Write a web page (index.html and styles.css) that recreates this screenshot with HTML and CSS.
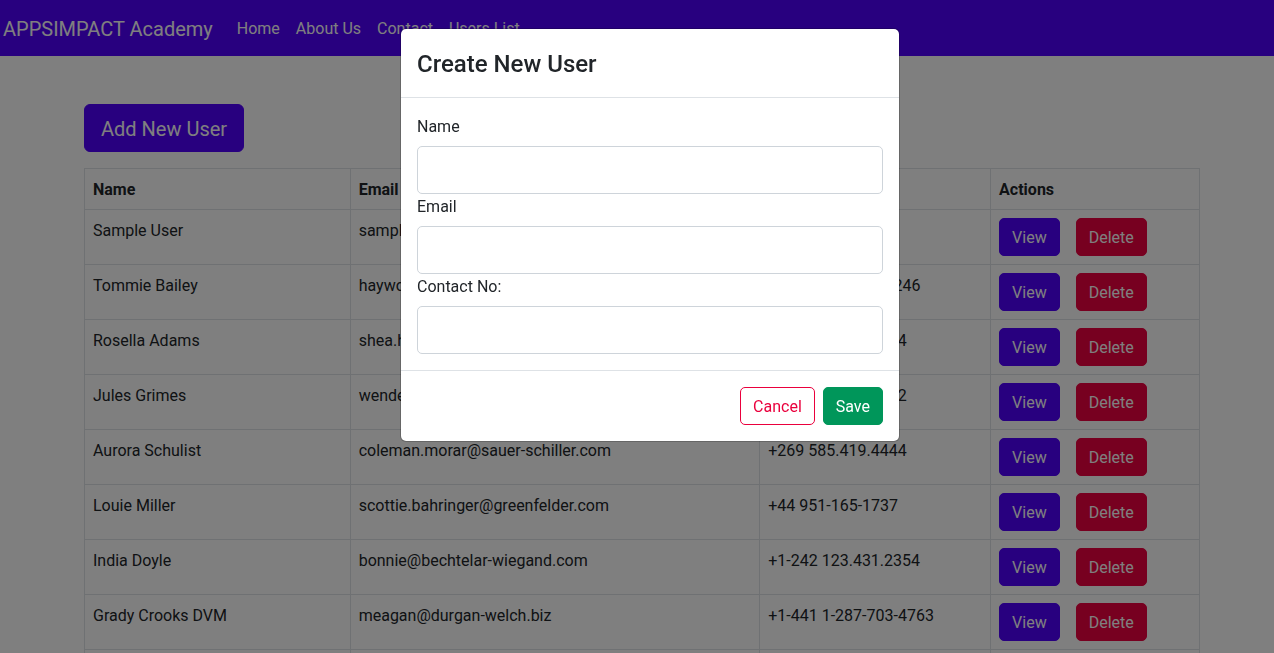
FILE: index.html
```html
<!DOCTYPE html>
<html lang="en">
<head>
<meta charset="utf-8">
<title>APPSIMPACT Academy</title>
<link rel="stylesheet" href="styles.css">
</head>
<body class="modal-open">
<nav class="navbar">
  <a class="brand" href="#">APPSIMPACT Academy</a>
  <ul class="nav">
    <li><a class="nav-link" href="#">Home</a></li>
    <li><a class="nav-link" href="#">About Us</a></li>
    <li><a class="nav-link" href="#">Contact</a></li>
    <li><a class="nav-link" href="#">Users List</a></li>
  </ul>
</nav>

<main class="container">
  <button class="btn btn-lg btn-primary">Add New User</button>
  <table class="table">
    <thead>
      <tr>
        <th class="col-name">Name</th>
        <th class="col-email">Email</th>
        <th class="col-contact">Contact No</th>
        <th class="col-actions">Actions</th>
      </tr>
    </thead>
    <tbody>
      <tr><td>Sample User</td><td>sample@gmail.com</td><td>9876543210</td><td><button class="btn btn-primary">View</button><button class="btn btn-danger">Delete</button></td></tr>
      <tr><td>Tommie Bailey</td><td>haywood.kuhn@kessler.com</td><td>+1-808 603-985-8246</td><td><button class="btn btn-primary">View</button><button class="btn btn-danger">Delete</button></td></tr>
      <tr><td>Rosella Adams</td><td>shea.hills@schmitt.info</td><td>+248 715.327.0134</td><td><button class="btn btn-primary">View</button><button class="btn btn-danger">Delete</button></td></tr>
      <tr><td>Jules Grimes</td><td>wendell.rau@gleason.org</td><td>+372 469.230.5812</td><td><button class="btn btn-primary">View</button><button class="btn btn-danger">Delete</button></td></tr>
      <tr><td>Aurora Schulist</td><td>coleman.morar@sauer-schiller.com</td><td>+269 585.419.4444</td><td><button class="btn btn-primary">View</button><button class="btn btn-danger">Delete</button></td></tr>
      <tr><td>Louie Miller</td><td>scottie.bahringer@greenfelder.com</td><td>+44 951-165-1737</td><td><button class="btn btn-primary">View</button><button class="btn btn-danger">Delete</button></td></tr>
      <tr><td>India Doyle</td><td>bonnie@bechtelar-wiegand.com</td><td>+1-242 123.431.2354</td><td><button class="btn btn-primary">View</button><button class="btn btn-danger">Delete</button></td></tr>
      <tr><td>Grady Crooks DVM</td><td>meagan@durgan-welch.biz</td><td>+1-441 1-287-703-4763</td><td><button class="btn btn-primary">View</button><button class="btn btn-danger">Delete</button></td></tr>
      <tr><td>Maxine Hoppe</td><td>lorenzo@walter.net</td><td>+61 892.441.3310</td><td><button class="btn btn-primary">View</button><button class="btn btn-danger">Delete</button></td></tr>
      <tr><td>Otis Brekke</td><td>evalyn.ortiz@hane.com</td><td>+1-345 555-019-2287</td><td><button class="btn btn-primary">View</button><button class="btn btn-danger">Delete</button></td></tr>
    </tbody>
  </table>
</main>

<div class="modal-backdrop"></div>
<div class="modal">
  <div class="modal-content">
    <div class="modal-header">
      <h3 class="modal-title">Create New User</h3>
    </div>
    <div class="modal-body">
      <label class="form-label" for="name">Name</label>
      <input class="form-control" id="name" type="text">
      <label class="form-label" for="email">Email</label>
      <input class="form-control" id="email" type="email">
      <label class="form-label" for="contact">Contact No:</label>
      <input class="form-control" id="contact" type="text">
    </div>
    <div class="modal-footer">
      <button class="btn btn-outline-danger">Cancel</button>
      <button class="btn btn-success">Save</button>
    </div>
  </div>
</div>
</body>
</html>
```

FILE: styles.css
```css
* { box-sizing: border-box; }

html, body { height: 100%; }

body {
  margin: 0;
  font-family: Roboto, "Liberation Sans", Arial, sans-serif;
  font-size: 16px;
  line-height: 1.5;
  color: #212529;
  background: #fff;
}

.modal-open { overflow: hidden; }

/* Navbar */
.navbar {
  height: 56px;
  background: #5000ff;
  display: flex;
  align-items: center;
  padding: 2px 3px 0;
}

.brand {
  color: #fff;
  font-size: 20px;
  line-height: 30px;
  text-decoration: none;
  margin-right: 16px;
}

.nav {
  display: flex;
  list-style: none;
  margin: 0;
  padding: 0;
}

.nav-link {
  display: block;
  padding: 8px;
  color: #fff;
  text-decoration: none;
  line-height: 24px;
}

/* Content */
.container {
  width: 1116px;
  margin-left: 84px;
  padding-top: 48px;
}

.btn {
  display: inline-block;
  font-family: inherit;
  font-size: 16px;
  line-height: 24px;
  padding: 7px 12px 5px;
  border: 1px solid transparent;
  border-radius: 5px;
  color: #fff;
  cursor: pointer;
  vertical-align: top;
}

.btn-lg {
  font-size: 20px;
  line-height: 30px;
  padding: 9px 16px 7px;
  border-radius: 6px;
}

.btn-primary { background: #5000ff; border-color: #5000ff; }
.btn-danger { background: #ee0040; border-color: #ee0040; margin-left: 16px; }
.btn-success { background: #00965a; border-color: #00965a; }
.btn-outline-danger { background: #fff; border-color: #ea003d; color: #ea003d; }

.table {
  width: 1116px;
  margin-top: 16px;
  border-collapse: collapse;
  background: #fff;
}

.table th,
.table td {
  border: 1px solid #dee2e6;
  padding: 9px 8px 7px;
  text-align: left;
  vertical-align: top;
  white-space: nowrap;
}

.table td:last-child { padding-top: 8px; padding-bottom: 8px; }

.table th { font-weight: 700; }

.col-name { width: 266px; }
.col-email { width: 410px; }
.col-contact { width: 231px; }
.col-actions { width: 209px; }

/* Modal */
.modal-backdrop {
  position: fixed;
  inset: 0;
  background: rgba(0, 0, 0, 0.5);
}

.modal {
  position: fixed;
  top: 28px;
  left: 400px;
  width: 500px;
}

.modal-content {
  background: #fff;
  border: 1px solid rgba(0, 0, 0, 0.2);
  border-radius: 6px;
  background-clip: padding-box;
}

.modal-header {
  padding: 18px 16px 15px;
  border-bottom: 1px solid #dee2e6;
}

.modal-title {
  margin: 0;
  font-size: 24px;
  font-weight: 500;
  line-height: 35px;
}

.modal-body {
  padding: 16px;
}

.form-label {
  display: block;
  padding-top: 1px;
  margin-bottom: 7px;
}

.form-control {
  display: block;
  width: 100%;
  height: 48px;
  padding: 8px 16px;
  font-family: inherit;
  font-size: 20px;
  border: 1px solid #ced4da;
  border-radius: 5px;
  background: #fff;
}

.modal-footer {
  display: flex;
  justify-content: flex-end;
  gap: 8px;
  padding: 16px;
  border-top: 1px solid #dee2e6;
}
```
